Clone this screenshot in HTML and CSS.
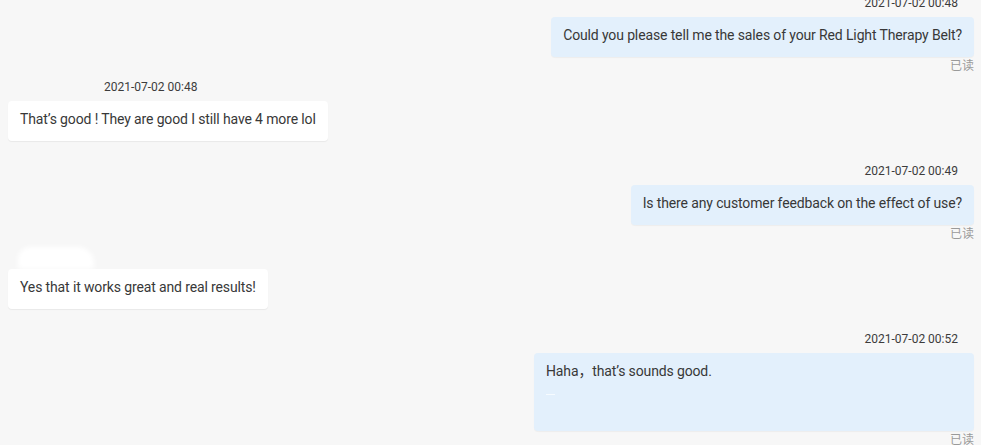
FILE: index.html
```html
<!DOCTYPE html>
<html lang="zh">
<head>
<meta charset="utf-8">
<title>Chat</title>
<link rel="stylesheet" href="styles.css">
</head>
<body>
<div class="chat">
  <div class="msg msg-right">
    <div class="meta"><span class="time">2021-07-02 00:48</span></div>
    <div class="bubble bubble-right">Could you please tell me the sales of your Red Light Therapy Belt?</div>
    <div class="read">已读</div>
  </div>

  <div class="msg msg-left">
    <div class="meta"><span class="name"></span><span class="time">2021-07-02 00:48</span></div>
    <div class="bubble bubble-left">That’s good ! They are good I still have 4 more lol</div>
  </div>

  <div class="msg msg-right">
    <div class="meta"><span class="time">2021-07-02 00:49</span></div>
    <div class="bubble bubble-right">Is there any customer feedback on the effect of use?</div>
    <div class="read">已读</div>
  </div>

  <div class="msg msg-left">
    <div class="meta"><span class="name-blur"></span></div>
    <div class="bubble bubble-left">Yes that it works great and real results!</div>
  </div>

  <div class="msg msg-right">
    <div class="meta"><span class="time">2021-07-02 00:52</span></div>
    <div class="bubble bubble-right bubble-wide">
      <div class="line">Haha，that’s sounds good.</div>
      <div class="extra"><span class="dash"></span></div>
    </div>
    <div class="read">已读</div>
  </div>
</div>
</body>
</html>
```

FILE: styles.css
```css
html, body {
  margin: 0;
  padding: 0;
  background: #f7f7f7;
  overflow: hidden;
}

body {
  font-family: Roboto, "Noto Sans CJK SC", sans-serif;
  color: #333;
}

.chat {
  display: flex;
  flex-direction: column;
  margin-top: -5px;
  padding: 0 7px 0 8px;
}

.msg {
  display: flex;
  flex-direction: column;
}

.msg-right {
  align-items: flex-end;
  margin-bottom: 5px;
}

.msg-left {
  align-items: flex-start;
  margin-bottom: 22px;
}

.meta {
  display: flex;
  align-items: center;
  height: 16px;
  margin-bottom: 6px;
  font-size: 12px;
  line-height: 16px;
  color: #3c3c3c;
}

.msg-right .meta {
  margin-right: 16px;
}

.name {
  display: inline-block;
  width: 96px;
}

.name-blur {
  display: inline-block;
  width: 76px;
  height: 22px;
  margin: 6px 0 0 10px;
  background: #fff;
  border-radius: 12px 16px 0 0;
  filter: blur(2.5px);
}

.bubble {
  box-sizing: border-box;
  font-size: 14px;
  line-height: 20px;
  letter-spacing: -0.13px;
  padding: 8px 12px 12px;
  border-radius: 4px;
  white-space: nowrap;
  color: #383838;
}

.bubble-right {
  background: #e3f0fc;
  box-shadow: 0 1px 1px rgba(0, 0, 0, 0.04);
}

.bubble-left {
  background: #fff;
  box-shadow: 0 1px 1px rgba(0, 0, 0, 0.06);
}

.bubble-wide {
  width: 440px;
  height: 78px;
  overflow: hidden;
}

.line {
  height: 20px;
}

.extra {
  height: 38px;
}

.dash {
  display: block;
  width: 9px;
  height: 1px;
  margin-top: 13px;
  background: #f6fbff;
}

.read {
  height: 16px;
  margin-top: 1px;
  font-size: 12px;
  line-height: 16px;
  color: #9a9a9a;
}
```
